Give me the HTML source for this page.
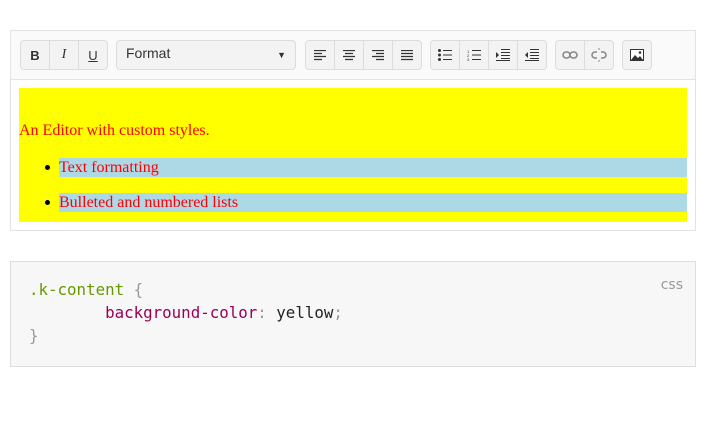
<!DOCTYPE html><html><head><style>
body{margin:0;width:706px;height:427px;background:#fff;position:relative;font-family:"Liberation Sans",sans-serif}
.ed{position:absolute;left:10px;top:30px;width:684px;height:199px;border:1px solid #e3e3e3;background:#fff}
.tb{position:absolute;left:0;top:0;width:684px;height:48px;background:#fafafa;border-bottom:1px solid #e3e3e3}
.g{position:absolute;top:9px;height:28px;border:1px solid #dcdcdc;border-radius:4px;background:#f3f3f3;display:flex;overflow:hidden}
.g div{width:28px;height:28px;border-right:1px solid #dcdcdc;display:flex;align-items:center;justify-content:center;font-size:13px;color:#333}
.g div:last-child{border-right:none}
.c{position:absolute;left:8px;top:57px;width:668px;height:134px;background:#ff0;font-family:"Liberation Serif",serif;font-size:16px;color:red}
.li{position:absolute;left:40px;width:628px;height:19px;background:#add8e6;line-height:19px}
.dot{position:absolute;left:-14px;top:7px;width:5px;height:5px;border-radius:50%;background:#000}
.code{position:absolute;left:10px;top:261px;width:684px;height:104px;border:1px solid #ddd;background:#f7f7f7}
pre{margin:0;position:absolute;left:18px;top:16px;font-family:"DejaVu Sans Mono",monospace;font-size:15.8px;line-height:23px;color:#222}
</style></head><body>
<div class="ed"><div class="tb">
<div class="g" style="left:9px"><div><b>B</b></div><div><i style="font-family:'Liberation Serif',serif;font-size:14px">I</i></div><div><u>U</u></div></div>
<div class="g" style="left:105px;width:178px;display:block"><span style="position:absolute;left:9px;top:4px;font-size:14px;color:#333">Format</span><span style="position:absolute;right:9px;top:9px;font-size:9px;color:#333">▼</span></div>
<div class="g" style="left:294px">
<div><svg width="12" height="11"><path d="M0 .5h12M0 3.5h8M0 6.5h12M0 9.5h8" stroke="#333" stroke-width="1.2"/></svg></div>
<div><svg width="12" height="11"><path d="M0 .5h12M2 3.5h8M0 6.5h12M2 9.5h8" stroke="#333" stroke-width="1.2"/></svg></div>
<div><svg width="12" height="11"><path d="M0 .5h12M4 3.5h8M0 6.5h12M4 9.5h8" stroke="#333" stroke-width="1.2"/></svg></div>
<div><svg width="12" height="11"><path d="M0 .5h12M0 3.5h12M0 6.5h12M0 9.5h12" stroke="#333" stroke-width="1.2"/></svg></div></div>
<div class="g" style="left:419px">
<div><svg width="14" height="12"><circle cx="1.5" cy="1.5" r="1.5" fill="#333"/><circle cx="1.5" cy="6" r="1.5" fill="#333"/><circle cx="1.5" cy="10.5" r="1.5" fill="#333"/><path d="M5 1.5h9M5 6h9M5 10.5h9" stroke="#333"/></svg></div>
<div><svg width="14" height="12"><text x="0" y="4" font-size="4" fill="#333">1</text><text x="0" y="8" font-size="4" fill="#333">2</text><text x="0" y="12" font-size="4" fill="#333">3</text><path d="M5 1.5h9M5 6h9M5 10.5h9" stroke="#333"/></svg></div>
<div><svg width="14" height="12"><path d="M0 3l3 3-3 3z" fill="#333"/><path d="M5 .5h9M5 3.5h9M5 6.5h9M5 9.5h9M0 11.5h14" stroke="#333"/></svg></div>
<div><svg width="14" height="12"><path d="M3 3L0 6l3 3z" fill="#333"/><path d="M5 .5h9M5 3.5h9M5 6.5h9M5 9.5h9M0 11.5h14" stroke="#333"/></svg></div></div>
<div class="g" style="left:544px">
<div><svg width="16" height="8"><rect x="1" y="1" width="7" height="6" rx="3" fill="none" stroke="#888" stroke-width="1.6"/><rect x="8" y="1" width="7" height="6" rx="3" fill="none" stroke="#888" stroke-width="1.6"/></svg></div>
<div><svg width="16" height="14"><path d="M6 4H4a3 3 0 0 0 0 6h2M10 4h2a3 3 0 0 1 0 6h-2" fill="none" stroke="#888" stroke-width="1.6"/><path d="M8 0v2M8 12v2" stroke="#888"/></svg></div></div>
<div class="g" style="left:611px"><div><svg width="14" height="12"><rect x=".5" y=".5" width="13" height="11" fill="#fff" stroke="#333"/><path d="M1 11l4-5 3 3 2-2 3 4z" fill="#333"/><circle cx="10" cy="3.5" r="1.3" fill="#333"/></svg></div></div>
</div>
<div class="c">
<div style="position:absolute;left:0;top:34px">An Editor with custom styles.</div>
<div class="li" style="top:70px"><span class="dot"></span>Text formatting</div>
<div class="li" style="top:105px"><span class="dot"></span>Bulleted and numbered lists</div>
</div></div>
<div class="code"><span style="position:absolute;right:12px;top:15px;font-size:14px;color:#999;font-family:'DejaVu Sans',sans-serif">css</span>
<pre><span style="color:#690">.k-content</span> <span style="color:#999">{</span>
        <span style="color:#905">background-color</span><span style="color:#999">:</span> yellow<span style="color:#999">;</span>
<span style="color:#999">}</span></pre></div>
</body></html>
